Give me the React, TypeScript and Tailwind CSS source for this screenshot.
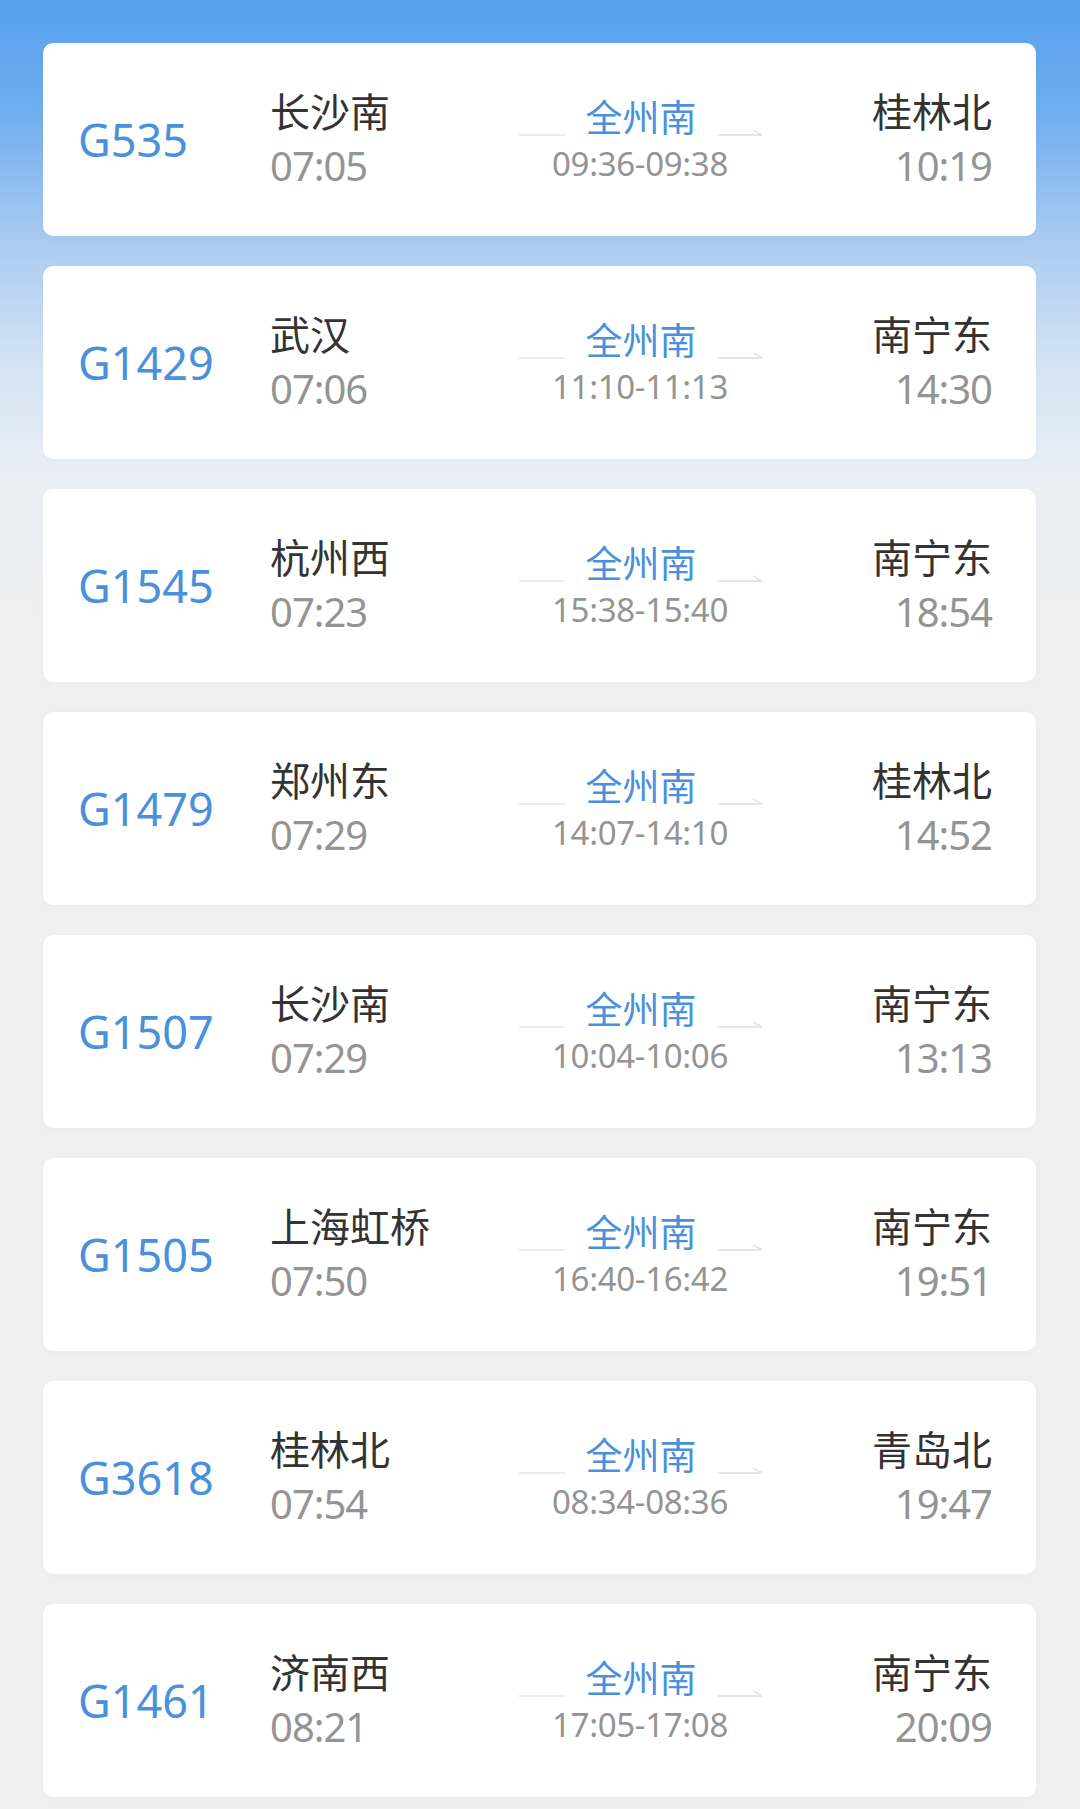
import React from 'react';

type Train = {
  no: string;
  from: string;
  dep: string;
  stop: string;
  stay: string;
  to: string;
  arr: string;
};

const trains: Train[] = [
  { no: 'G535', from: '长沙南', dep: '07:05', stop: '全州南', stay: '09:36-09:38', to: '桂林北', arr: '10:19' },
  { no: 'G1429', from: '武汉', dep: '07:06', stop: '全州南', stay: '11:10-11:13', to: '南宁东', arr: '14:30' },
  { no: 'G1545', from: '杭州西', dep: '07:23', stop: '全州南', stay: '15:38-15:40', to: '南宁东', arr: '18:54' },
  { no: 'G1479', from: '郑州东', dep: '07:29', stop: '全州南', stay: '14:07-14:10', to: '桂林北', arr: '14:52' },
  { no: 'G1507', from: '长沙南', dep: '07:29', stop: '全州南', stay: '10:04-10:06', to: '南宁东', arr: '13:13' },
  { no: 'G1505', from: '上海虹桥', dep: '07:50', stop: '全州南', stay: '16:40-16:42', to: '南宁东', arr: '19:51' },
  { no: 'G3618', from: '桂林北', dep: '07:54', stop: '全州南', stay: '08:34-08:36', to: '青岛北', arr: '19:47' },
  { no: 'G1461', from: '济南西', dep: '08:21', stop: '全州南', stay: '17:05-17:08', to: '南宁东', arr: '20:09' },
];

const font = "font-['Noto_Sans','Noto_Sans_CJK_SC',sans-serif]";

const TrainCard: React.FC<{ t: Train }> = ({ t }) => (
  <div className="flex h-[193px] items-center rounded-[10px] bg-white pl-[35px] pr-[44px] shadow-[0_1px_6px_rgba(0,0,0,0.03)]">
    {/* Train number */}
    <div className="w-[192px] text-[45px] leading-none text-[#4a90dc]">{t.no}</div>

    {/* Departure */}
    <div className="flex w-[248px] flex-col">
      <span className="text-[40px] leading-[40px] text-[#333333]">{t.from}</span>
      <span className="mt-[12px] text-[40px] leading-[44px] tracking-[-1px] text-[#949494]">{t.dep}</span>
    </div>

    {/* Stop */}
    <div className="flex w-[244px] flex-col items-center">
      <div className="flex items-end">
        <div className="mb-[3px] h-[2px] w-[46px] bg-[#ebebeb]" />
        <span className="mx-[21px] text-[37px] leading-[42px] text-[#4a90dc]">{t.stop}</span>
        <svg width="44" height="10" viewBox="0 0 44 10" className="mb-[2px]">
          <path d="M0 8 H44 L35 3" fill="none" stroke="#e6e6e6" strokeWidth="2" />
        </svg>
      </div>
      <span className="mt-[6px] text-[33px] leading-[38px] tracking-[-0.3px] text-[#949494]">{t.stay}</span>
    </div>

    {/* Arrival */}
    <div className="flex flex-1 flex-col items-end">
      <span className="text-[40px] leading-[40px] text-[#333333]">{t.to}</span>
      <span className="mt-[12px] text-[40px] leading-[44px] tracking-[-1px] text-[#949494]">{t.arr}</span>
    </div>
  </div>
);

export default function App() {
  return (
    <div
      className={`${font} min-h-[1809px] w-[1080px] bg-[linear-gradient(180deg,#56a0ee_0px,#6fadef_110px,#a9cbf1_240px,#d3e3f4_360px,#eaeff5_480px,#f0f0f0_620px)] pl-[43px] pr-[44px] pt-[43px]`}
    >
      <div className="flex flex-col gap-[30px]">
        {trains.map((t) => (
          <TrainCard key={t.no} t={t} />
        ))}
      </div>
    </div>
  );
}
